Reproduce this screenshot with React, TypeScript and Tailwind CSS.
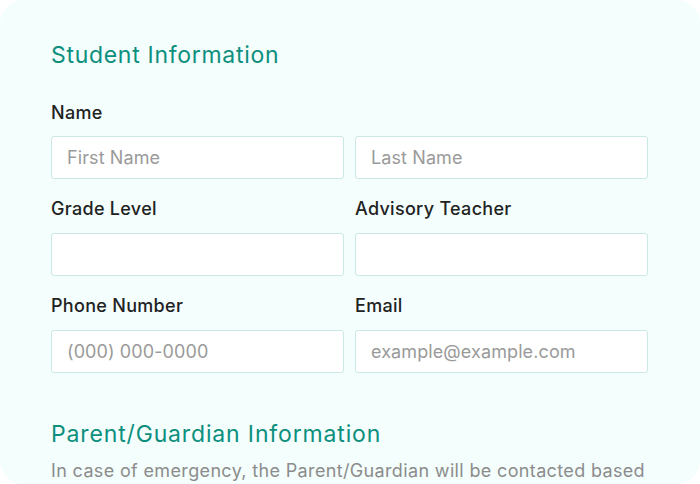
const font = { fontFamily: 'Inter, "Noto Sans", sans-serif' };

const inputCls =
  "h-[43px] w-full rounded-[3px] border border-[#cbe8e4] bg-white px-[15px] text-[18px] tracking-[0.1px] text-[#333] placeholder:text-[#9a9a9a] outline-none";

const Field = ({ label, placeholder }: { label: string; placeholder?: string }) => (
  <div className="flex flex-col">
    <label className="h-[25px] pt-[1px] text-[18px] leading-[24px] tracking-[0.3px] font-medium text-[#222222]">{label}</label>
    <input className={`mt-[12px] ${inputCls}`} placeholder={placeholder} />
  </div>
);

export default function App() {
  return (
    <div className="w-[700px] h-[484px] bg-white" style={font}>
      <div className="h-full w-full overflow-hidden rounded-[24px] bg-[#f3fefd] pl-[51px] pr-[52px] pt-[40px]">
        <h2 className="h-[30px] text-[23px] leading-[30px] tracking-[0.7px] text-[#0d8f7d]">Student Information</h2>

        <div className="mt-[31px] flex flex-col gap-[17px]">
          <div className="flex flex-col">
            <span className="h-[24px] text-[18px] leading-[24px] tracking-[0.3px] font-medium text-[#222222]">Name</span>
            <div className="mt-[11px] grid grid-cols-2 gap-[11px]">
              <input className={inputCls} placeholder="First Name" />
              <input className={inputCls} placeholder="Last Name" />
            </div>
          </div>
          <div className="grid grid-cols-2 gap-[11px]">
            <Field label="Grade Level" />
            <Field label="Advisory Teacher" />
          </div>
          <div className="grid grid-cols-2 gap-[11px]">
            <Field label="Phone Number" placeholder="(000) 000-0000" />
            <Field label="Email" placeholder="example@example.com" />
          </div>
        </div>

        <h2 className="mt-[46px] h-[30px] text-[23px] leading-[30px] tracking-[0.85px] text-[#0d8f7d]">
          Parent/Guardian Information
        </h2>
        <p className="mt-[10px] whitespace-nowrap text-[18px] leading-[24px] tracking-[0.35px] text-[#8c8c8c]">
          In case of emergency, the Parent/Guardian will be contacted based
        </p>
      </div>
    </div>
  );
}
